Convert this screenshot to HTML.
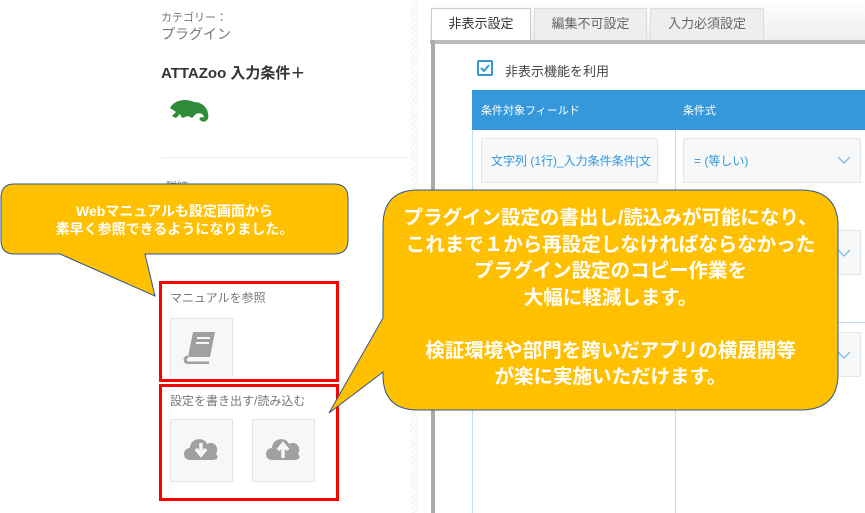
<!DOCTYPE html>
<html><head><meta charset="utf-8"><style>
body{margin:0;width:865px;height:513px;overflow:hidden;background:#fff;font-family:"Liberation Sans","Noto Sans CJK JP",sans-serif;position:relative}
.a{position:absolute}
.g{color:#777}
</style></head><body>
<div class="a" style="left:410px;top:0;width:8px;height:513px;background:repeating-linear-gradient(135deg,#f6f6f6 0 2px,#fff 2px 4px)"></div>
<div class="a g" style="left:161px;top:9px;font-size:11px">カテゴリー：</div>
<div class="a g" style="left:161px;top:24px;font-size:14px">プラグイン</div>
<div class="a" style="left:161px;top:62px;font-size:15px;font-weight:bold;color:#333">ATTAZoo 入力条件＋</div>
<svg class="a" style="left:166px;top:96px" width="48" height="30" viewBox="0 0 48 30"><path d="M4 12 C8 4 20 2 28 6 C36 6 42 12 42 18 C44 24 38 28 34 24 C32 22 36 20 38 22 C38 18 34 16 30 18 L26 22 L22 20 L16 22 L14 18 L10 22 L6 20 L10 16 Z" fill="#2e8b3a"/></svg>
<div class="a" style="left:161px;top:157px;width:247px;height:1px;background:#eee"></div>
<div class="a g" style="left:166px;top:178px;font-size:11px">詳細</div>

<div class="a" style="left:159px;top:281px;width:174px;height:95px;border:3px solid #f00"></div>
<div class="a g" style="left:170px;top:289px;font-size:12px">マニュアルを参照</div>
<div class="a" style="left:170px;top:318px;width:61px;height:58px;background:#f6f7f8;border:1px solid #e5e5e5;border-bottom:none"></div>
<svg class="a" style="left:183px;top:330px" width="36" height="34" viewBox="0 0 36 34"><path d="M10 2 H32 L27 27 H5 Z" fill="#a0a0a0"/><path d="M5 27 C1 27 1 33 6 33 H26" stroke="#a0a0a0" stroke-width="3" fill="none"/><path d="M14 8h13M13 13h13" stroke="#f6f7f8" stroke-width="2"/></svg>

<div class="a" style="left:159px;top:384px;width:174px;height:111px;border:3px solid #f00"></div>
<div class="a g" style="left:170px;top:392px;font-size:12px">設定を書き出す/読み込む</div>
<div class="a" style="left:170px;top:419px;width:61px;height:61px;background:#f6f7f8;border:1px solid #e5e5e5"></div>
<div class="a" style="left:252px;top:419px;width:61px;height:61px;background:#f6f7f8;border:1px solid #e5e5e5"></div>
<svg class="a" style="left:182px;top:432px" width="38" height="30" viewBox="0 0 38 30"><path d="M8 28 C0 28 0 16 8 16 C8 6 22 4 25 12 C32 8 38 16 34 22 C38 26 34 28 30 28 Z" fill="#a0a0a0"/><path d="M19 11v11M14 17l5 6 5-6" stroke="#f6f7f8" stroke-width="3.5" fill="none"/></svg>
<svg class="a" style="left:264px;top:432px" width="38" height="30" viewBox="0 0 38 30"><path d="M8 28 C0 28 0 16 8 16 C8 6 22 4 25 12 C32 8 38 16 34 22 C38 26 34 28 30 28 Z" fill="#a0a0a0"/><path d="M19 26v-11M14 18l5-6 5 6" stroke="#f6f7f8" stroke-width="3.5" fill="none"/></svg>

<!-- right area -->
<div class="a" style="left:430px;top:0;width:435px;height:40px;background:linear-gradient(#fff,#eee)"></div>
<div class="a" style="left:431px;top:8px;width:98px;height:34px;background:#fff;border:1px solid #ccc;border-bottom:none;font-size:13px;color:#333;text-align:center;line-height:30px">非表示設定</div>
<div class="a" style="left:534px;top:8px;width:111px;height:32px;background:#eee;border:1px solid #ddd;font-size:13px;color:#666;text-align:center;line-height:30px">編集不可設定</div>
<div class="a" style="left:650px;top:8px;width:112px;height:32px;background:#eee;border:1px solid #ddd;font-size:13px;color:#666;text-align:center;line-height:30px">入力必須設定</div>
<div class="a" style="left:430px;top:40px;width:435px;height:4px;background:#bbb"></div>
<div class="a" style="left:431px;top:40px;width:4px;height:473px;background:#aaa"></div>
<div class="a" style="left:477px;top:60px;width:16px;height:16px;border:2px solid #3498db;border-radius:2px;box-sizing:border-box"></div>
<svg class="a" style="left:479px;top:62px" width="12" height="12"><path d="M2 6l3 3 5-6" stroke="#3498db" stroke-width="2" fill="none"/></svg>
<div class="a" style="left:505px;top:61px;font-size:13px;color:#444">非表示機能を利用</div>
<div class="a" style="left:472px;top:90px;width:393px;height:40px;background:#3498db"></div>
<div class="a" style="left:481px;top:102px;font-size:11px;color:#fff">条件対象フィールド</div>
<div class="a" style="left:683px;top:102px;font-size:11px;color:#fff">条件式</div>
<div class="a" style="left:472px;top:130px;width:1px;height:383px;background:#bde0f3"></div>
<div class="a" style="left:675px;top:130px;width:1px;height:383px;background:#bde0f3"></div>
<div class="a" style="left:472px;top:322px;width:393px;height:1px;background:#bde0f3"></div>
<div class="a" style="left:481px;top:138px;width:177px;height:45px;background:#f6f8fa;border:1px solid #e3e7ea;font-size:12px;color:#3498db;line-height:45px;padding-left:9px;box-sizing:border-box;overflow:hidden;white-space:nowrap">文字列 (1行)_入力条件条件[文</div>
<div class="a" style="left:683px;top:138px;width:178px;height:45px;background:#f6f8fa;border:1px solid #e3e7ea;font-size:12px;color:#3498db;line-height:45px;padding-left:10px;box-sizing:border-box">= (等しい)</div>
<div class="a" style="left:683px;top:230px;width:178px;height:45px;background:#f6f8fa;border:1px solid #e3e7ea;box-sizing:border-box"></div>
<div class="a" style="left:683px;top:332px;width:178px;height:45px;background:#f6f8fa;border:1px solid #e3e7ea;box-sizing:border-box"></div>
<svg class="a" style="left:0;top:0" width="865" height="513"><g stroke="#7fb8e0" stroke-width="1.3" fill="none"><path d="M838 157l6 6 6-6M838 250l6 6 6-6M838 352l6 6 6-6"/></g></svg>

<!-- bubbles -->
<svg class="a" style="left:0;top:0" width="865" height="513">
<path d="M14 184 H334 Q348 184 348 198 V240 Q348 254 334 254 H145 L155 296 L60 254 H14 Q1 254 1 240 V198 Q1 184 14 184 Z" fill="#ffc000" stroke="#2f5597" stroke-width="1"/>
<path d="M418 190 H800 Q838 190 838 226 V374 Q838 410 800 410 H418 Q383 410 383 375 V372 L329 413 L383 318 V226 Q383 190 418 190 Z" fill="#ffc000" stroke="#2f5597" stroke-width="1"/>
</svg>
<div class="a" style="left:1px;top:202px;width:347px;text-align:center;color:#fff;font-weight:bold;font-size:14px;line-height:18px">Webマニュアルも設定画面から<br>素早く参照できるようになりました。</div>
<div class="a" style="left:383px;top:205px;width:455px;text-align:center;color:#fff;font-weight:bold;font-size:19.5px;line-height:26.5px;white-space:nowrap">プラグイン設定の書出し/読込みが可能になり、<br>これまで１から再設定しなければならなかった<br>プラグイン設定のコピー作業を<br>大幅に軽減します。<br><br>検証環境や部門を跨いだアプリの横展開等<br>が楽に実施いただけます。</div>
</body></html>
